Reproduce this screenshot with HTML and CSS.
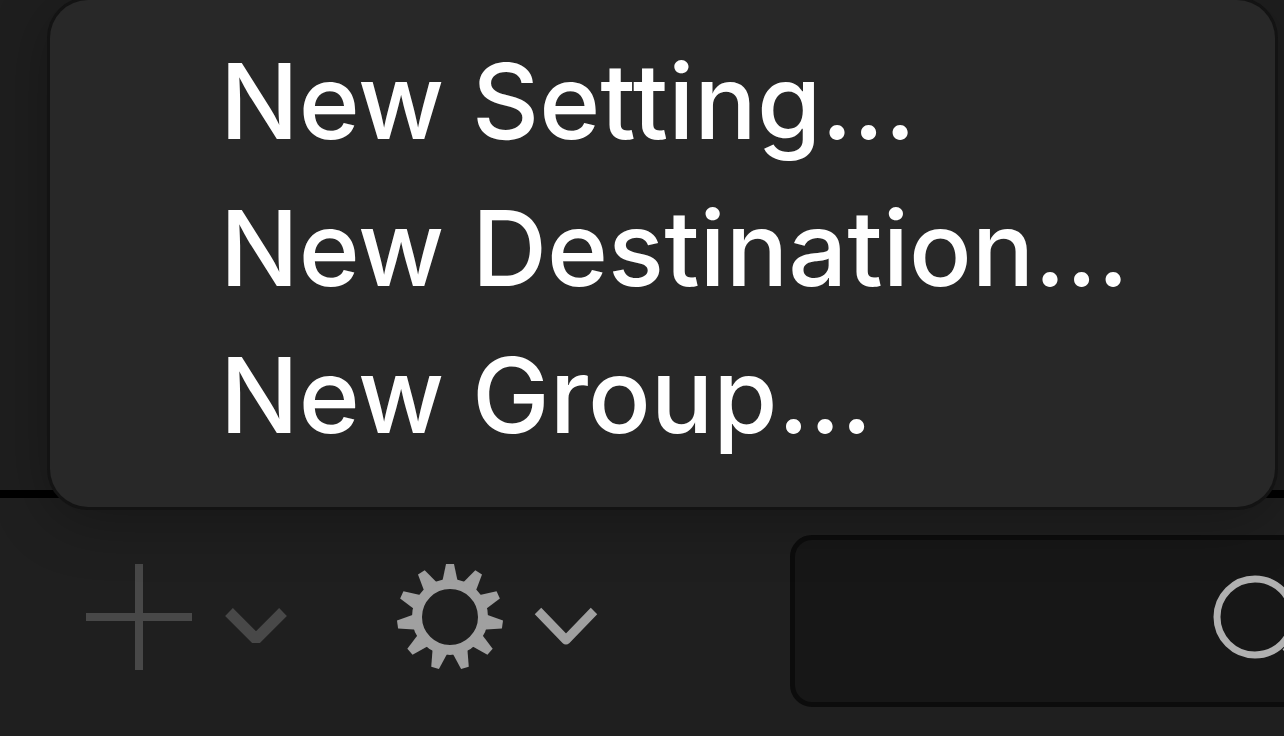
FILE: index.html
```html
<!DOCTYPE html>
<html lang="en">
<head>
    <meta charset="UTF-8">
    <meta name="viewport" content="width=device-width, initial-scale=1.0">
    <title>Settings</title>
    <link rel="stylesheet" href="styles.css">
</head>
<body>

<main class="pane"></main>

<div class="toolbar">
    <button type="button" class="tool add" aria-label="Add" disabled>
        <svg width="106" height="106" viewBox="0 0 106 106">
            <path d="M53 0V106M0 53H106" stroke="currentColor" stroke-width="8"/>
        </svg>
        <svg class="chevron" width="66" height="42" viewBox="0 0 66 42">
            <path d="M6 6L33 33L60 6" fill="none" stroke="currentColor" stroke-width="11" stroke-linejoin="bevel"/>
        </svg>
    </button>

    <button type="button" class="tool action" aria-label="Actions">
        <svg width="108" height="106" viewBox="-54 -53 108 106">
            <defs>
                <path id="tooth" d="M-8 -34L-4 -53H4L8 -34Z"/>
            </defs>
            <circle r="33" fill="none" stroke="currentColor" stroke-width="10"/>
            <g fill="currentColor">
                <use href="#tooth"/>
                <use href="#tooth" transform="rotate(32.727)"/>
                <use href="#tooth" transform="rotate(65.455)"/>
                <use href="#tooth" transform="rotate(98.182)"/>
                <use href="#tooth" transform="rotate(130.909)"/>
                <use href="#tooth" transform="rotate(163.636)"/>
                <use href="#tooth" transform="rotate(196.364)"/>
                <use href="#tooth" transform="rotate(229.091)"/>
                <use href="#tooth" transform="rotate(261.818)"/>
                <use href="#tooth" transform="rotate(294.545)"/>
                <use href="#tooth" transform="rotate(327.273)"/>
            </g>
        </svg>
        <svg class="chevron" width="66" height="42" viewBox="0 0 66 42">
            <path d="M5 5L33 34L61 5" fill="none" stroke="currentColor" stroke-width="9" stroke-linejoin="round"/>
        </svg>
    </button>

    <div class="search">
        <input type="search" aria-label="Search">
        <svg width="126" height="120" viewBox="0 0 126 120">
            <g fill="none" stroke="currentColor" stroke-width="7">
                <circle cx="42" cy="56" r="38"/>
                <path d="M72 86L99 113"/>
            </g>
        </svg>
    </div>
</div>

<div class="menu">
    <button type="button">New Setting…</button>
    <button type="button">New Destination…</button>
    <button type="button">New Group…</button>
</div>

</body>
</html>
```

FILE: styles.css
```css
* {
    box-sizing: border-box;
}
body {
    position: relative;
    display: flex;
    flex-direction: column;
    min-height: 100vh;
    margin: 0;
    overflow: hidden;
    background-color: #1f1f1f;
    color: #fff;
    font-family: Inter, "Liberation Sans", sans-serif;
}
button, input {
    margin: 0;
    padding: 0;
    border: none;
    background: none;
    color: inherit;
    font: inherit;
}
svg {
    display: block;
    flex: none;
}
.pane {
    flex: 1;
    background-color: #1e1e1e;
    border-bottom: 8px solid #000;
}
.toolbar {
    display: flex;
    align-items: center;
    height: 238px;
    padding-left: 86px;
    overflow: hidden;
}
.tool {
    display: flex;
    align-items: center;
    flex: none;
}
.add {
    gap: 31px;
    width: 310px;
    color: #484848;
}
.action {
    gap: 29px;
    width: 394px;
    color: #a0a0a0;
}
.chevron {
    margin-top: 20px;
}
.search {
    display: flex;
    align-items: center;
    flex: 1;
    height: 172px;
    margin-top: 8px;
    margin-right: -60px;
    border: 5px solid #0c0c0c;
    border-radius: 22px;
    background-color: #171717;
    color: #b0b0b0;
}
.search input {
    flex: 1;
    min-width: 0;
    height: 100%;
    outline: none;
}
.menu {
    position: absolute;
    top: 0;
    left: 50px;
    right: 9px;
    display: flex;
    flex-direction: column;
    padding: 28px 0 38px;
    border-radius: 38px;
    background-color: #282828;
    box-shadow: 0 0 0 3px #131313, 0 12px 60px rgba(0, 0, 0, 0.3);
}
.menu button {
    padding-left: 170px;
    font-size: 104px;
    font-weight: 500;
    line-height: 147px;
    text-align: left;
    white-space: nowrap;
}
```
